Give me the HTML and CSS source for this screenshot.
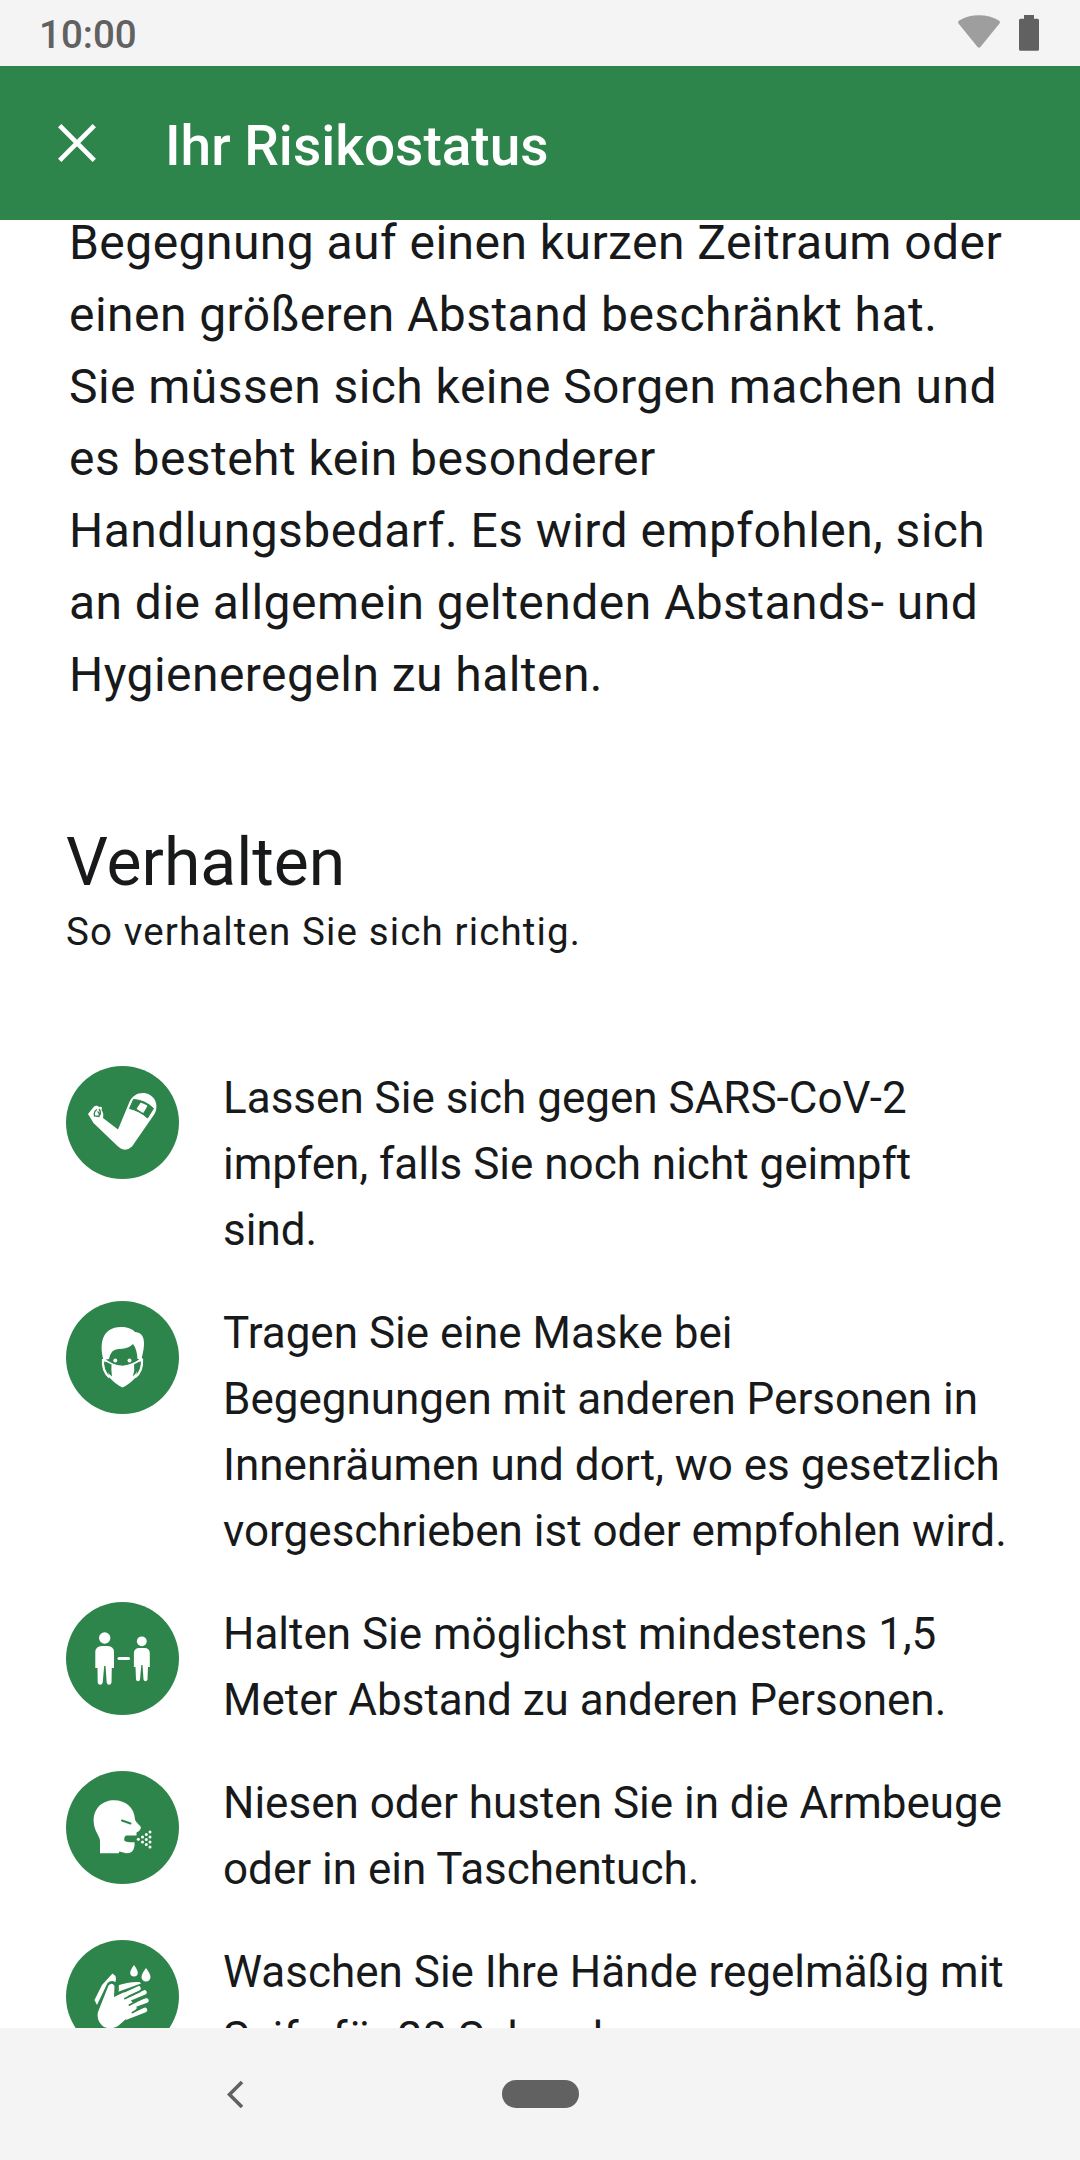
FILE: index.html
```html
<!DOCTYPE html>
<html lang="de">
<head>
<meta charset="utf-8">
<title>Ihr Risikostatus</title>
<link rel="stylesheet" href="styles.css">
</head>
<body>
<div class="screen">
  <div class="status-bar">
    <span class="clock">10:00</span>
    <div class="status-icons">
      <svg class="wifi" width="42" height="33" viewBox="0 0 42 33"><path d="M1.200 5.600C12-1.500 30-1.500 40.800 5.600q1.900 1.400.5 3.200L22.400 32q-1.400 1.600-2.800 0L.7 8.800q-1.400-1.800.5-3.200z" fill="#9e9e9e"/></svg>
      <svg class="battery" width="20" height="36" viewBox="0 0 20 36"><path d="M5 0h10v3.700h3.500q1.500 0 1.500 1.500v29q0 1.500-1.500 1.500h-17q-1.500 0-1.500-1.500v-29q0-1.500 1.500-1.500H5z" fill="#616161"/></svg>
    </div>
  </div>
  <header class="app-bar">
    <svg class="close" width="38" height="38" viewBox="0 0 38 38"><path d="M1.700 1.700l34.600 34.600M36.300 1.700L1.700 36.300" stroke="#fff" stroke-width="4.700"/></svg>
    <h1 class="app-title">Ihr Risikostatus</h1>
  </header>
  <main class="content">
    <p class="risk-text">Begegnung auf einen kurzen Zeitraum oder<br>einen größeren Abstand beschränkt hat.<br>Sie müssen sich keine Sorgen machen und<br>es besteht kein besonderer<br>Handlungsbedarf. Es wird empfohlen, sich<br>an die allgemein geltenden Abstands- und<br>Hygieneregeln zu halten.</p>
    <h2 class="section-title">Verhalten</h2>
    <p class="section-subtitle">So verhalten Sie sich richtig.</p>
    <ul class="tips">
      <li class="tip">
        <svg class="tip-icon" viewBox="0 0 113 113"><path d="M22 48L28 40.500Q31 39 33 41Q37 40 35.500 44Q38 47 37 52L52 63.500L63 37C67 27 77 25 84 29C91 33 92 42 88.500 48L66 80.500Q59 87 52 80.500L27.500 57z" fill="#fff"/><path d="M67.500 33.500L63.500 42.500Q74 45 81.500 52L87.500 42.500Q79 34 67.500 33.500z" fill="#2e854b" stroke="#2e854b" stroke-linejoin="round"/><path d="M75 37.500l5.500 2.500-3.500 6-5.500-3.300z" fill="#fff" stroke="#fff" stroke-width="1.500" stroke-linejoin="round"/><path d="M31 43.500Q27.500 45.500 28.500 50l4.500.5q1-3.500-1.500-5M33 43q2 2 1 6" fill="none" stroke="#2e854b" stroke-width="1.300"/></svg>
        <p class="tip-text">Lassen Sie sich gegen SARS-CoV-2<br>impfen, falls Sie noch nicht geimpft<br>sind.</p>
      </li>
      <li class="tip">
        <svg class="tip-icon" viewBox="0 0 113 113"><path d="M37.500 59C33 43 36 26 55 26C61 26 66 27.500 69 31C79 31.500 80 42 75.500 58L71.500 58Q71 48 67 43Q63 47.500 54 48Q45 47 43 58z" fill="#fff"/><path d="M37 58Q47 66 57 66Q67 65 76.500 57.500" fill="none" stroke="#fff" stroke-width="2.500"/><path d="M40.500 60Q49 65 57 65Q65 65 72.500 60L70 76Q64 83 56.500 86.500Q49 83 43 76z" fill="#fff"/><path d="M37 58Q36 70 43.500 76.500M76 58Q77 70 69 76.500" fill="none" stroke="#fff" stroke-width="2.200"/><path d="M39.500 60.500l6 3Q45 69 46 75.500Q38.500 70 39.500 60.500zM73.500 60.500l-5.500 3Q69 69 67 75.500Q73 70 73.500 60.500z" fill="#2e854b"/><circle cx="49.300" cy="59.500" r="2" fill="#fff"/><circle cx="63.500" cy="59.500" r="2" fill="#fff"/></svg>
        <p class="tip-text">Tragen Sie eine Maske bei<br>Begegnungen mit anderen Personen in<br>Innenräumen und dort, wo es gesetzlich<br>vorgeschrieben ist oder empfohlen wird.</p>
      </li>
      <li class="tip">
        <svg class="tip-icon" viewBox="0 0 113 113"><g fill="#fff"><circle cx="38.700" cy="36" r="5.700"/><path d="M36 44h5.500Q48 44 48 50.500V66h-2.200L45.500 80.500q-.5 2.200-2.500 2.200t-2.300-2.200L39.500 64h-1.300L36.700 80.500q-.5 2.200-2.500 2.200t-2.500-2.200L31.500 66H29.300V50.500Q29.300 44 36 44z"/><circle cx="75.800" cy="39.300" r="4.900"/><path d="M73.500 46h5Q83.800 46 83.800 51.500V65h-1.800L81.500 77.500q-.3 1.700-2 1.700t-2-1.700L76.500 63h-1.200L74 77.500q-.3 1.700-2 1.700t-2-1.700L69.500 65h-1.600V51.500Q67.900 46 73.500 46z"/><rect x="51.500" y="55" width="12.500" height="3" rx="1.500"/></g></svg>
        <p class="tip-text">Halten Sie möglichst mindestens 1,5<br>Meter Abstand zu anderen Personen.</p>
      </li>
      <li class="tip">
        <svg class="tip-icon" viewBox="0 0 113 113"><path d="M34 82.300V70C34 65 28 60 27.700 51C27 37 37 29.300 48 29.300C60 29.300 68.500 37 69 48.500C70 52 75 54.500 75 57Q74 60 70.500 61.500V64.500H60Q57.500 66 58.500 70Q61 71.500 68.500 71.300Q69 73 68 77Q67 82.300 60 82.300L53.500 80.500L52.700 82.300z" fill="#fff"/><path d="M56 49.500l8.500 3" stroke="#2e854b" stroke-width="2" stroke-linecap="round"/><g fill="#fff"><circle cx="72.300" cy="68.300" r="1.500"/><circle cx="76.500" cy="66" r="1.500"/><circle cx="76.500" cy="71" r="1.500"/><circle cx="80.300" cy="63.500" r="1.500"/><circle cx="80.300" cy="68.500" r="1.500"/><circle cx="80.300" cy="73.500" r="1.500"/><circle cx="84" cy="61" r="1.500"/><circle cx="84" cy="66" r="1.500"/><circle cx="84" cy="71" r="1.500"/><circle cx="84" cy="76" r="1.500"/></g></svg>
        <p class="tip-text">Niesen oder husten Sie in die Armbeuge<br>oder in ein Taschentuch.</p>
      </li>
      <li class="tip">
        <svg class="tip-icon" viewBox="0 0 113 113"><g fill="#fff"><path d="M28.500 60Q31 55 36 45L46.500 33.500Q49.500 35 50 38.500L49.500 42Q45 39.500 41.500 43L31 65z"/><path d="M51 46Q62 41.500 73.500 42L75 43.500L51.500 52z"/><path d="M68 25q3.800 5 3.800 7.800a3.800 3.800 0 0 1-7.600 0Q64.200 30 68 25zM80 28q4.500 6 4.500 9a4.500 4.500 0 0 1-9 0Q75.500 34 80 28z"/><path d="M32 72L42.500 45.500Q46 42 48.500 46L48 57L62 65L69 73L60 79L52 86Q45 90 38 87Q30 81 32 72z"/><path d="M48 57L58 52L71 68L60 80z"/></g><path d="M51.500 44Q53 50 50.500 54.500L62 49.500" fill="none" stroke="#2e854b" stroke-width="1.800"/><g stroke="#fff" stroke-width="4.600" stroke-linecap="round"><path d="M52 58L72.500 48.500M58 61L78.500 52.500M61 67.500L80.500 60.500M61 77L79 70"/></g><g stroke="#2e854b" stroke-width="1.900" stroke-linecap="round"><path d="M59 58.500L74 51.500M63.500 65L78 57.500M66.500 72.500L78 66.500"/></g></svg>
        <p class="tip-text">Waschen Sie Ihre Hände regelmäßig mit<br>Seife für 20 Sekunden.</p>
      </li>
    </ul>
  </main>
  <nav class="nav-bar">
    <svg class="back" width="17" height="28" viewBox="0 0 17 28"><path d="M15 2L2.500 14.500 15 27" fill="none" stroke="#616161" stroke-width="3.600"/></svg>
    <span class="home"></span>
    <span class="nav-spacer"></span>
  </nav>
</div>
</body>
</html>
```
FILE: styles.css
```css
* { box-sizing: border-box; margin: 0; padding: 0; }
body { font-family: Roboto, sans-serif; color: #17191a; background: #fff; }
.screen { width: 1080px; height: 2160px; display: flex; flex-direction: column; overflow: hidden; }
.status-bar { height: 66px; flex: none; background: #f4f4f4; display: flex; justify-content: space-between; padding: 0 41px 0 39px; }
.clock { font-size: 38.5px; font-weight: 500; line-height: 45px; padding-top: 12px; color: #616161; }
.status-icons { display: flex; gap: 19px; padding-top: 15px; }
.app-bar { height: 154px; flex: none; background: #2e854b; color: #fff; display: flex; padding-left: 58px; }
.close { margin-top: 58px; }
.app-title { font-size: 55px; font-weight: 500; line-height: 64px; margin: 48px 0 0 69px; }
.content { flex: 1; min-height: 0; overflow: hidden; }
.risk-text { font-size: 48px; line-height: 72px; letter-spacing: 0.45px; padding-left: 69px; margin-top: -13px; white-space: nowrap; }
.section-title { font-size: 66px; font-weight: 400; line-height: 78px; margin: 113px 0 0 66px; }
.section-subtitle { font-size: 38.5px; line-height: 46px; letter-spacing: 1.12px; margin: 7px 0 0 66px; }
.tips { list-style: none; display: flex; flex-direction: column; gap: 37px; padding: 111px 0 0 66px; }
.tip { display: flex; gap: 44px; }
.tip-icon { flex: none; width: 113px; height: 113px; border-radius: 50%; background: #2e854b; }
.tip-text { font-size: 44px; line-height: 66px; white-space: nowrap; margin: -1px 0 1px; }
.nav-bar { height: 132px; flex: none; background: #f4f4f4; display: flex; align-items: center; padding: 0 227px; justify-content: space-between; }
.home { width: 77px; height: 28px; border-radius: 14px; background: #616161; }
.nav-spacer { width: 17px; }
```
